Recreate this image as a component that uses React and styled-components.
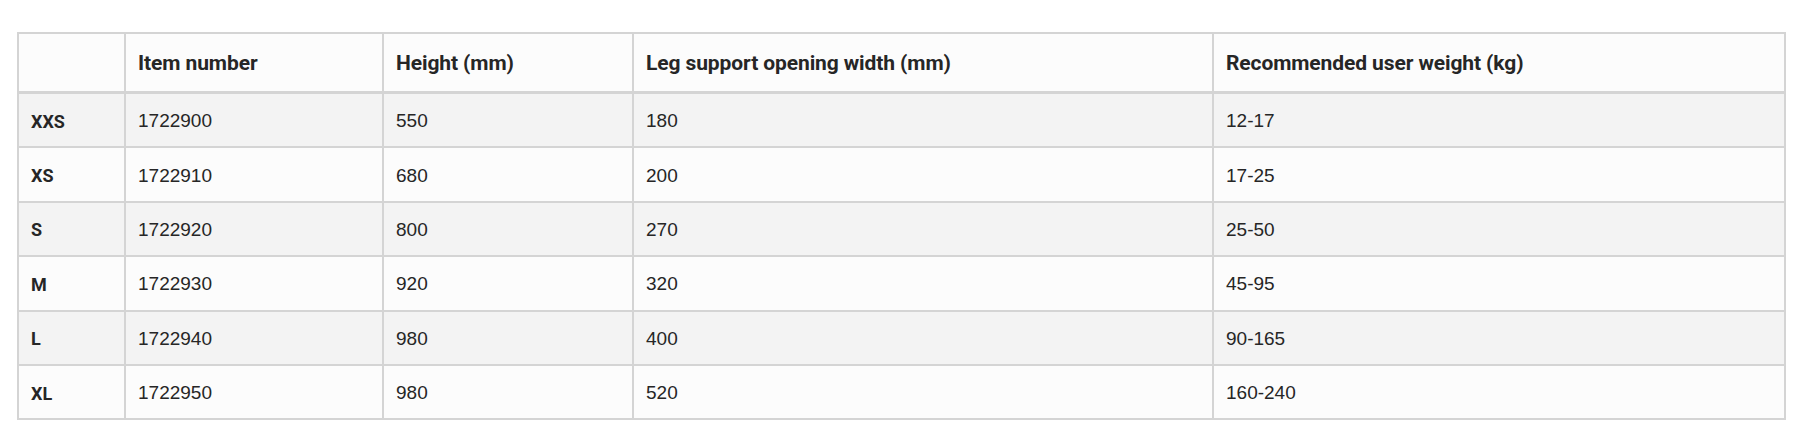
import React from "react";
import styled, { createGlobalStyle } from "styled-components";

const Global = createGlobalStyle`
  html, body { margin: 0; padding: 0; background: #ffffff; }
  body { font-family: "Liberation Sans", Arial, sans-serif; color: #222; }
`;

const Page = styled.div`
  padding: 32px 16px 20px 17px;
`;

const Table = styled.table`
  width: 1767px;
  border-collapse: separate;
  border-spacing: 0;
  border: 1px solid #d4d4d4;
  table-layout: fixed;
`;

const HeadCell = styled.th`
  text-align: left;
  font-family: "Roboto", "Liberation Sans", sans-serif;
  font-weight: 700;
  font-size: 21px;
  letter-spacing: -0.1px;
  color: #262626;
  background: #fcfcfc;
  border: 1px solid #d4d4d4;
  border-bottom-width: 2px;
  padding: 1px 12px 0;
  height: 56px;
`;

const Row = styled.tr`
  background: ${(p) => (p.$alt ? "#f3f3f3" : "#fcfcfc")};
`;

const Cell = styled.td`
  border: 1px solid #d4d4d4;
  padding: 2px 12px 0;
  height: 50.4px;
  font-family: ${(p) => (p.$label ? '"Roboto", "Liberation Sans", sans-serif' : '"Liberation Sans", Arial, sans-serif')};
  font-weight: ${(p) => (p.$label ? 700 : 400)};
  font-size: ${(p) => (p.$label ? "18px" : "19px")};
  color: #262626;
`;

const cols = [107, 258, 250, 580, 572];
const headers = ["", "Item number", "Height (mm)", "Leg support opening width (mm)", "Recommended user weight (kg)"];
const rows = [
  ["XXS", "1722900", "550", "180", "12-17"],
  ["XS", "1722910", "680", "200", "17-25"],
  ["S", "1722920", "800", "270", "25-50"],
  ["M", "1722930", "920", "320", "45-95"],
  ["L", "1722940", "980", "400", "90-165"],
  ["XL", "1722950", "980", "520", "160-240"],
];

export default function App() {
  return (
    <Page>
      <Global />
      <Table>
        <colgroup>
          {cols.map((w, i) => (
            <col key={i} style={{ width: w }} />
          ))}
        </colgroup>
        <thead>
          <tr>
            {headers.map((h, i) => (
              <HeadCell key={i}>{h}</HeadCell>
            ))}
          </tr>
        </thead>
        <tbody>
          {rows.map((r, i) => (
            <Row key={i} $alt={i % 2 === 0}>
              {r.map((c, j) => (
                <Cell key={j} $label={j === 0}>
                  {c}
                </Cell>
              ))}
            </Row>
          ))}
        </tbody>
      </Table>
    </Page>
  );
}
